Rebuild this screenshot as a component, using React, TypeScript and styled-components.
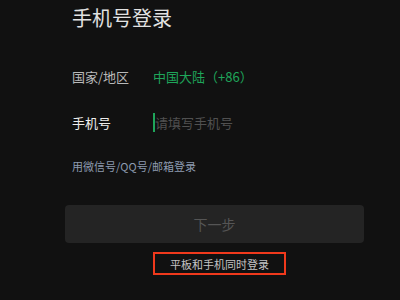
import React from "react";
import styled, { createGlobalStyle } from "styled-components";

const Global = createGlobalStyle`
  html, body { margin: 0; padding: 0; background: #111111; }
  body { font-family: "Noto Sans CJK SC", "Noto Sans", sans-serif; }
`;

const Page = styled.div`
  width: 400px;
  height: 300px;
  background: #111111;
  display: flex;
  flex-direction: column;
  padding: 0 36px 0 65px;
  box-sizing: border-box;
  overflow: hidden;
`;

const Title = styled.h1`
  margin: 0;
  padding: 4px 0 0 7px;
  font-size: 20px;
  line-height: 28px;
  font-weight: 400;
  color: #e2e2e2;
`;

const Row = styled.div<{ $top: number }>`
  display: flex;
  align-items: center;
  margin-top: ${(p) => p.$top}px;
  padding-left: 7px;
  height: 22px;
`;

const Label = styled.span<{ $bright?: boolean }>`
  width: 81px;
  font-size: 13px;
  color: ${(p) => (p.$bright ? "#ececec" : "#b9b9b9")};
  font-weight: 400;
`;

const Value = styled.span`
  font-size: 13px;
  color: #1fa55a;
`;

const InputWrap = styled.div`
  display: flex;
  align-items: center;
`;

const Cursor = styled.span`
  width: 2px;
  height: 19px;
  background: #1fa55a;
`;

const Placeholder = styled.span`
  font-size: 13px;
  color: #505050;
`;

const AltLink = styled.div`
  margin-top: 25px;
  padding-left: 7px;
  font-size: 11px;
  line-height: 16px;
  color: #8d9bb0;
`;

const NextButton = styled.div`
  margin-top: 31px;
  width: 299px;
  height: 38px;
  border-radius: 4px;
  background: #242424;
  color: #555555;
  font-size: 14px;
  display: flex;
  align-items: center;
  justify-content: center;
`;

const HighlightBox = styled.div`
  margin: 9px 0 0 88px;
  width: 133px;
  height: 23px;
  box-sizing: border-box;
  border: 2px solid #f0391c;
  display: flex;
  align-items: center;
  justify-content: center;
  font-size: 11px;
  color: #c4c4c4;
`;

export default function App() {
  return (
    <>
      <Global />
      <Page>
        <Title>手机号登录</Title>
        <Row $top={33}>
          <Label>国家/地区</Label>
          <Value>中国大陆（+86）</Value>
        </Row>
        <Row $top={24}>
          <Label $bright>手机号</Label>
          <InputWrap>
            <Cursor />
            <Placeholder>请填写手机号</Placeholder>
          </InputWrap>
        </Row>
        <AltLink>用微信号/QQ号/邮箱登录</AltLink>
        <NextButton>下一步</NextButton>
        <HighlightBox>平板和手机同时登录</HighlightBox>
      </Page>
    </>
  );
}
